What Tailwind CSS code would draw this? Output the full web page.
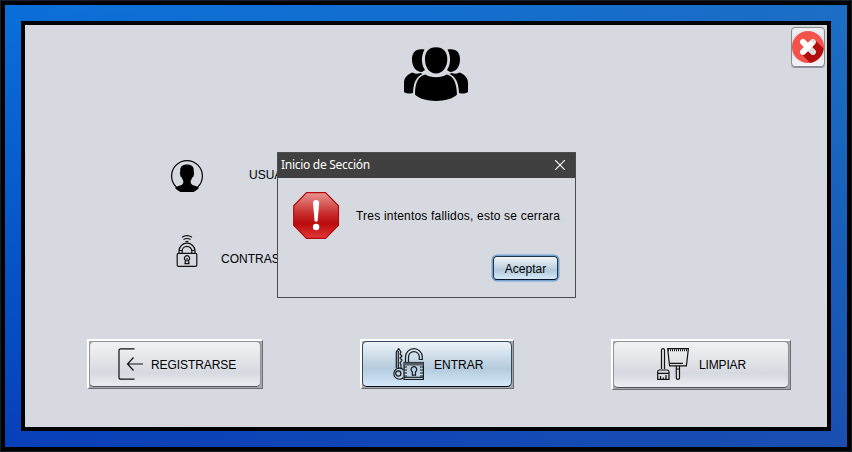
<!DOCTYPE html>
<html lang="es">
<head>
<meta charset="utf-8">
<title>Inicio de Sección</title>
<script src="https://cdn.jsdelivr.net/npm/@tailwindcss/browser@4"></script>
</head>
<body class="relative h-[452px] w-[852px] overflow-hidden bg-[#17202a] p-px font-['Liberation_Sans',Arial,sans-serif] text-[12px] leading-4 text-black">
<div class="h-[450px] w-[850px] bg-black p-1">
<div class="h-[442px] w-[842px] bg-linear-to-b from-[#0b6fd9] to-[#083fb9]">
<div class="h-[442px] w-[842px] bg-linear-to-r from-transparent to-[#3c6ca0]/35 p-4">
<main class="flex h-[410px] w-[810px] flex-col border-4 border-black bg-[#d6d9e0]">
  <header class="flex h-[135px] shrink-0 items-start">
    <svg class="mt-[22px] ml-[379px] h-[54px] w-16 shrink-0" viewBox="0 0 64 54">
      <path d="M20.5 2.5C12 1 8 5 8 12.500c0 7 4 12.500 10 12.500l3-2c-4-6-4-14-.5-20.500ZM43.500 2.500C52 1 56 5 56 12.500c0 7-4 12.500-10 12.500l-3-2c4-6 4-14 .5-20.500Z"/>
      <path d="M0 45V36c0-5 3-8.500 8.500-10.500 3 1.500 5.500 1.500 8 .5l2 1C13 29.500 9.500 34 9 46c-4 1-7 .5-9-1ZM64 45V36c0-5-3-8.500-8.500-10.500-3 1.500-5.500 1.500-8 .5l-2 1C51 29.500 54.500 34 55 46c4 1 7 .5 9-1Z"/>
      <path d="M32 .2C24.500.2 21 5 21 12c0 8 4 14.500 11 14.500S43.300 20 43.300 12C43.300 5 39.500.2 32 .2ZM21.500 27.500c5 3.500 16 3.500 21 0 7 1.500 10 8 10.500 20-8 8.500-34 8.500-42 0 0-12 3.500-18.500 10.500-20Z"/>
    </svg>
    <button class="mt-0.5 mr-0.5 ml-auto flex h-10 w-[34px] items-center justify-center rounded-[4px] border border-[#858990] bg-linear-to-b from-[#eff0f3] via-[#d6d9e0] to-[#f4f6f8] shadow-[0_1px_0_#92959c]">
      <svg class="h-8 w-8 shrink-0" viewBox="0 0 32 32">
        <circle cx="16" cy="16" r="16" fill="#f3534b"/>
        <path d="m22.500 8.500 9 9A16 16 0 0 1 18 31.800l-8.500-8.500Z" fill="#b10e0d"/>
        <path d="m11 11 10 10M21 11 11 21" stroke="#fff" stroke-width="5.600" stroke-linecap="round"/>
        <path d="m14 18 7-7M16 16l5 5" stroke="#dcdcdc" stroke-width="5.600" stroke-linecap="round"/>
        <path d="m11 11 4 4M11 21l8-8" stroke="#fff" stroke-width="5.600" stroke-linecap="round"/>
      </svg>
    </button>
  </header>
  <section class="flex h-[179px] shrink-0 flex-col">
    <div class="flex h-8 items-center">
      <svg class="ml-[146px] h-8 w-8" viewBox="0 0 32 32">
        <circle cx="16" cy="16" r="15.400" fill="none" stroke="#000" stroke-width="1.200"/>
        <path d="M16 4.500c-5.500 0-7.300 3-6.700 7.200l-.5 1 .8 4 1.200.8c.4 1.500 1 2.500 1.500 3.200.2 3-.5 4-3.300 4.900-2.200.7-4 1.400-5 2.400a16 16 0 0 0 24 0c-1-1-2.800-1.700-5-2.400-2.800-.9-3.500-1.900-3.300-4.900.5-.7 1.100-1.700 1.500-3.200l1.200-.8.8-4-.5-1c.6-4.200-1.200-7.200-6.700-7.200Z"/>
      </svg>
      <label class="-mt-0.5 ml-[46px] w-7 overflow-hidden">USUARIO</label>
    </div>
    <div class="mt-[43px] flex h-8 items-center">
      <svg class="ml-[151px] h-8 w-[22px]" viewBox="0 0 22 32" fill="none" stroke="#111" stroke-width="1.200">
        <path d="M6 2.200Q11-1 16 2.200M7.500 4.500Q11 2.500 14.500 4.500"/>
        <path d="M9.500 6.700Q11 6 12.500 6.700M3 18v-2a8 7.800 0 0 1 16 0v2M6.200 18v-2a4.800 4.600 0 0 1 9.600 0v2M3 15.500h3.200M15.800 15.500H19"/>
        <rect x="1.200" y="18.300" width="19.600" height="13" rx="1.300"/>
        <path d="M9.500 25.400a2.600 2.600 0 1 1 3 0l.5 3.200H9Z"/><path d="M11 23v3.500"/>
      </svg>
      <label class="mt-4 ml-[23px] w-14 overflow-hidden">CONTRASEÑA</label>
    </div>
  </section>
  <footer class="flex items-start">
    <div class="ml-[62px] h-[50px] w-[176px] shrink-0 border-t-2 border-r border-b border-l-2 border-t-white border-r-[#6b6d72] border-b-[#6b6d72] border-l-white bg-[#a6a8ad] pr-px pb-px">
      <button class="flex h-[46px] w-[172px] items-center rounded-[5px] border border-[#8f9299] border-b-[#505359] bg-linear-to-b from-[#f2f3f5] via-[#d6d9e0] via-70% to-[#ebedf2]">
        <svg class="ml-7 h-8 w-8" viewBox="0 0 32 32" fill="none" stroke="#111" stroke-width="1.200">
          <path d="M16.500.8H3Q1 .8 1 2.500v27q0 1.700 2 1.700h13.500M25 16H9.500M15.500 9.500 9.500 16l6 6.500"/>
        </svg>
        <span class="mt-0.5 ml-px tracking-[-0.08px] whitespace-nowrap">REGISTRARSE</span>
      </button>
    </div>
    <div class="ml-[97px] h-[50px] w-[154px] shrink-0 border-t-2 border-r border-b border-l-2 border-t-white border-r-[#6b6d72] border-b-[#6b6d72] border-l-white bg-[#a6a8ad] pr-px pb-px">
      <button class="flex h-[46px] w-[150px] items-center rounded-[5px] border border-[#32485c] border-b-[#050d19] bg-linear-to-b from-[#edf3f7] via-[#b4cbdd] via-60% to-[#d4e9fa]">
        <svg class="ml-[29px] h-8 w-8" viewBox="0 0 32 32" fill="none" stroke="#161a1e" stroke-width="1.200">
          <path d="M4.300 20V4L6.700.7 9 4l-1 2 2 2-2 2 2 2-2 3 1 2v3M6.300 3v17M11.500 21.800A5.600 5.600 0 1 0 11.500 29.500"/>
          <circle cx="6.300" cy="25.500" r="2.600"/>
          <path d="M13.500 14V9a8.400 8.400 0 0 1 16.800 0v2.500h-3V9a5.400 5.400 0 0 0-10.800 0v5"/>
          <rect x="12" y="14.500" width="19.400" height="17"/>
          <path d="M12 16h19.400" stroke="#555c62" stroke-width="3"/>
          <path d="M12 29.300h19.400"/>
          <path d="M12 19h3m-3 3h3m-3 3h3m-3 3h3m13-9h3m-3 3h3m-3 3h3m-3 3h3" stroke-width="1"/>
          <path d="M20.300 23.800a2.800 2.800 0 1 1 3.200 0v3.400h-3.200Z"/>
        </svg>
        <span class="mt-0.5 ml-[10px] whitespace-nowrap">ENTRAR</span>
      </button>
    </div>
    <div class="ml-[97px] h-[51px] w-[180px] shrink-0 border-t-2 border-r border-b border-l-2 border-t-white border-r-[#6b6d72] border-b-[#6b6d72] border-l-white bg-[#a6a8ad] pr-px pb-px">
      <button class="flex h-[47px] w-[176px] items-center rounded-[5px] border border-[#8f9299] border-b-[#505359] bg-linear-to-b from-[#f2f3f5] via-[#d6d9e0] via-70% to-[#ebedf2]">
        <svg class="-mt-px ml-[43px] h-8 w-8" viewBox="0 0 32 32" fill="none" stroke="#111" stroke-width="1.200">
          <path d="M4.500 21V2q0-1.300 1.500-1.300T7.500 2v19M2 22h8q2 0 2 2v7.300H.7V24q0-2 1.300-2ZM.7 25.300H12M3.500 28v3M6.300 29.500v2M9 27v4"/>
          <path d="M10.700.7h20.700l-2 17.200H12.600L10.700 1ZM13 15.300h13M19.300 18.500V30q0 1.300 1.600 1.300t1.600-1.300V18.500M19.300 21h3.200"/>
          <path d="M11 2.200h20" stroke-width="2" stroke-dasharray="1 1"/>
        </svg>
        <span class="ml-[10px] tracking-[-0.15px] whitespace-nowrap">LIMPIAR</span>
      </button>
    </div>
  </footer>
</main>
</div>
</div>
</div>
<div role="dialog" class="absolute top-[152px] left-[277px] flex h-[146px] w-[299px] flex-col border border-[#4c4c4e] bg-[#d6d9e0]">
  <div class="flex h-[25px] shrink-0 items-center bg-[#404040] pr-[10px] pb-0.5 pl-[3px] text-white">
    <h1 class="font-['Noto_Sans','Open_Sans',sans-serif] text-[12px] tracking-[-0.28px]">Inicio de Sección</h1>
    <svg class="ml-auto h-[10px] w-[10px]" viewBox="0 0 10 10" stroke="#fff" stroke-width="1.100"><path d="m0 0 10 10M10 0 0 10"/></svg>
  </div>
  <div class="flex items-center pt-[14px] pl-[15px]">
    <svg class="h-[47px] w-[47px]" viewBox="0 0 47 47">
      <defs><linearGradient id="stop" x2="0" y2="1"><stop stop-color="#e99491"/><stop offset=".45" stop-color="#c82f2e"/><stop offset=".68" stop-color="#b90b0c"/><stop offset="1" stop-color="#e33839"/></linearGradient></defs>
      <path d="M13.500.7h19l13 13.100v19.400l-13 13.100h-19L.7 33.200V13.800Z" fill="url(#stop)" stroke="#b00a0c" stroke-width="1.200"/>
      <path d="M20 11q0-3 3.100-3t3.100 3l-1.600 18q-1.500 1.300-3 0Z" fill="#fff"/><circle cx="23.100" cy="35" r="3.200" fill="#fff"/>
    </svg>
    <p class="ml-[16px] tracking-[0.2px] whitespace-nowrap">Tres intentos fallidos, esto se cerrara</p>
  </div>
  <button class="mt-[17px] ml-[215px] h-[24px] w-[65px] shrink-0 rounded-[4px] border border-[#1e354c] border-b-[#07142a] bg-linear-to-b from-[#f1f5f8] via-[#b3cadb] via-60% to-[#d4e8f8] pt-0.5 shadow-[0_0_0_1.5px_#73a4d1]">Aceptar</button>
</div>
</body>
</html>
